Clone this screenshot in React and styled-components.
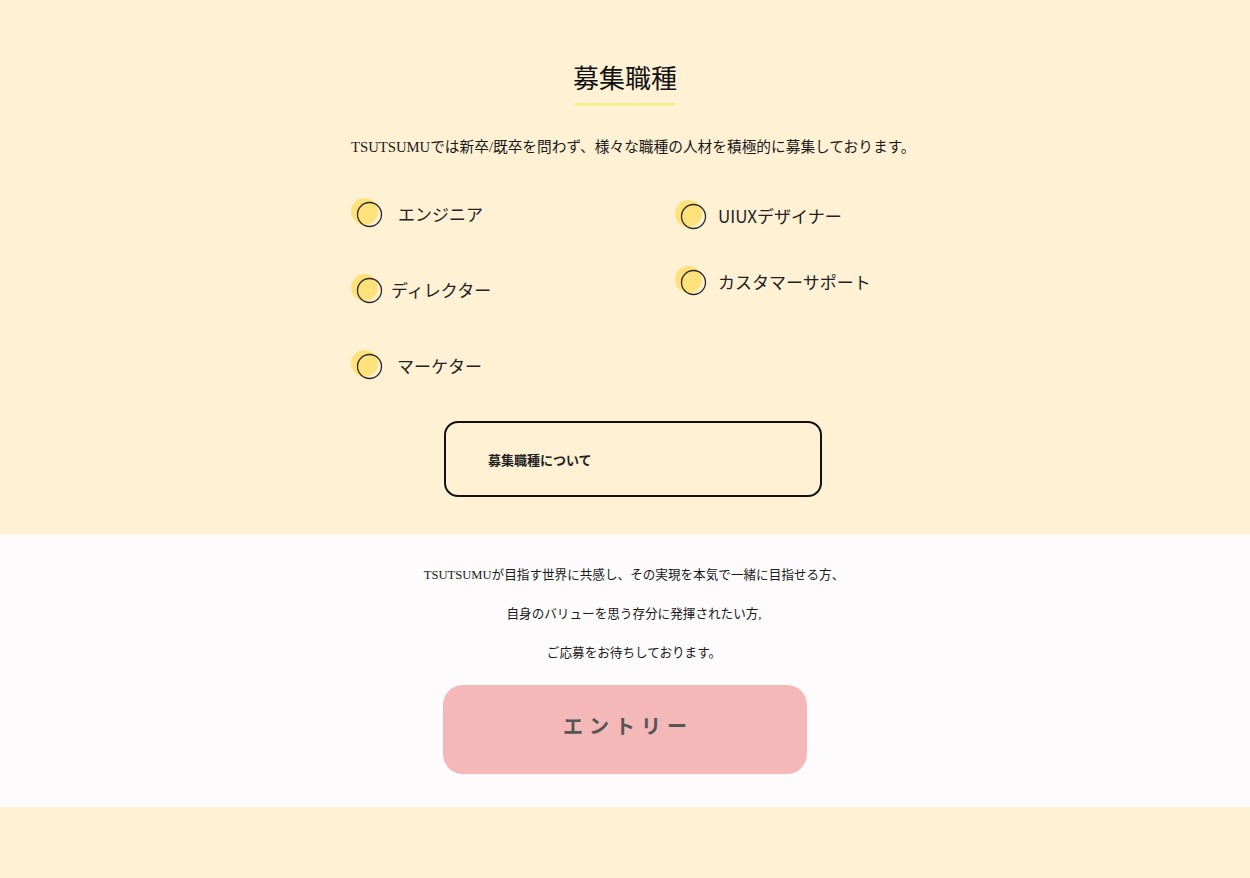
import React from 'react';
import styled, { createGlobalStyle } from 'styled-components';

const GlobalStyle = createGlobalStyle`
  body {
    margin: 0;
    background: #fff1d4;
    font-family: "Noto Sans CJK JP", "Noto Sans", sans-serif;
    color: #222;
  }
`;

const JobsSection = styled.section`
  background: #fff1d4;
  padding: 58px 0 38px;
  display: flex;
  flex-direction: column;
  align-items: center;
`;

const Title = styled.h2`
  margin: 0;
  font-size: 26px;
  line-height: 38px;
  font-weight: 400;
  color: #111;
`;

const TitleBar = styled.div`
  width: 100px;
  height: 3px;
  margin-top: 7px;
  background: #f6ee8c;
`;

const Inner = styled.div`
  width: 548px;
  display: flex;
  flex-direction: column;
`;

const Lead = styled.p`
  margin: 29px 0 0;
  font-family: "Liberation Serif", "Noto Sans CJK JP", serif;
  font-size: 14.7px;
  line-height: 24px;
  white-space: nowrap;
  color: #1a1a1a;
`;

const JobGrid = styled.div`
  margin-top: 40px;
  display: grid;
  grid-template-columns: 324px 1fr;
`;

const JobColumn = styled.ul`
  list-style: none;
  margin: 0;
  padding: 0;
  display: flex;
  flex-direction: column;
  gap: ${p => p.$gap}px;
  padding-top: ${p => p.$top || 0}px;
`;

const JobItem = styled.li`
  display: flex;
  align-items: center;
  height: 28px;
  gap: ${p => p.$gap}px;
  font-size: 17px;
  color: #222;
  transform: translateY(${p => p.$shift || 0}px);
`;

const AboutButton = styled.a`
  margin: 42px 0 0 93px;
  width: 378px;
  height: 76px;
  box-sizing: border-box;
  border: 2px solid #111;
  border-radius: 14px;
  display: flex;
  align-items: center;
  padding-left: 42px;
  font-size: 13px;
  font-weight: 700;
  color: #222;
  text-decoration: none;
`;

const EntrySection = styled.section`
  background: #fdfbfb;
  padding: 21px 0 33px;
  display: flex;
  flex-direction: column;
  align-items: center;
`;

const Message = styled.div`
  padding-left: 18px;
  text-align: center;
  font-family: "Liberation Serif", "Noto Sans CJK JP", serif;
  font-size: 12.6px;
  color: #1a1a1a;

  p {
    margin: 0;
    line-height: 39px;
  }
`;

const EntryButton = styled.a`
  margin-top: 12px;
  width: 364px;
  height: 89px;
  box-sizing: border-box;
  padding-bottom: 8px;
  border-radius: 20px;
  background: #f4b8b8;
  display: flex;
  align-items: center;
  justify-content: center;
  font-size: 20px;
  font-weight: 700;
  letter-spacing: 6px;
  text-indent: 6px;
  color: #555;
  text-decoration: none;
`;

const Footer = styled.div`
  height: 71px;
  background: #fff1d4;
`;

const Dot = () => (
  <svg width="32" height="30" viewBox="0 0 32 30">
    <circle cx="13.5" cy="13.5" r="13.5" fill="#fde27c" />
    <circle cx="18.5" cy="16.5" r="12" fill="none" stroke="#2a2a2a" strokeWidth="1.3" />
  </svg>
);

const leftJobs = [
  { name: 'エンジニア', gap: 15 },
  { name: 'ディレクター', gap: 8 },
  { name: 'マーケター', gap: 14 },
];

const rightJobs = [
  { name: 'UIUXデザイナー', gap: 11, shift: 1 },
  { name: 'カスタマーサポート', gap: 11 },
];

export default function App() {
  return (
    <>
      <GlobalStyle />
      <JobsSection>
        <Title>募集職種</Title>
        <TitleBar />
        <Inner>
          <Lead>TSUTSUMUでは新卒/既卒を問わず、様々な職種の人材を積極的に募集しております。</Lead>
          <JobGrid>
            <JobColumn $gap={48}>
              {leftJobs.map(j => (
                <JobItem key={j.name} $gap={j.gap}>
                  <Dot />
                  {j.name}
                </JobItem>
              ))}
            </JobColumn>
            <JobColumn $gap={39} $top={1}>
              {rightJobs.map(j => (
                <JobItem key={j.name} $gap={j.gap} $shift={j.shift}>
                  <Dot />
                  {j.name}
                </JobItem>
              ))}
            </JobColumn>
          </JobGrid>
          <AboutButton href="#">募集職種について</AboutButton>
        </Inner>
      </JobsSection>
      <EntrySection>
        <Message>
          <p>TSUTSUMUが目指す世界に共感し、その実現を本気で一緒に目指せる方、</p>
          <p>自身のバリューを思う存分に発揮されたい方,</p>
          <p>ご応募をお待ちしております。</p>
        </Message>
        <EntryButton href="#">エントリー</EntryButton>
      </EntrySection>
      <Footer />
    </>
  );
}
